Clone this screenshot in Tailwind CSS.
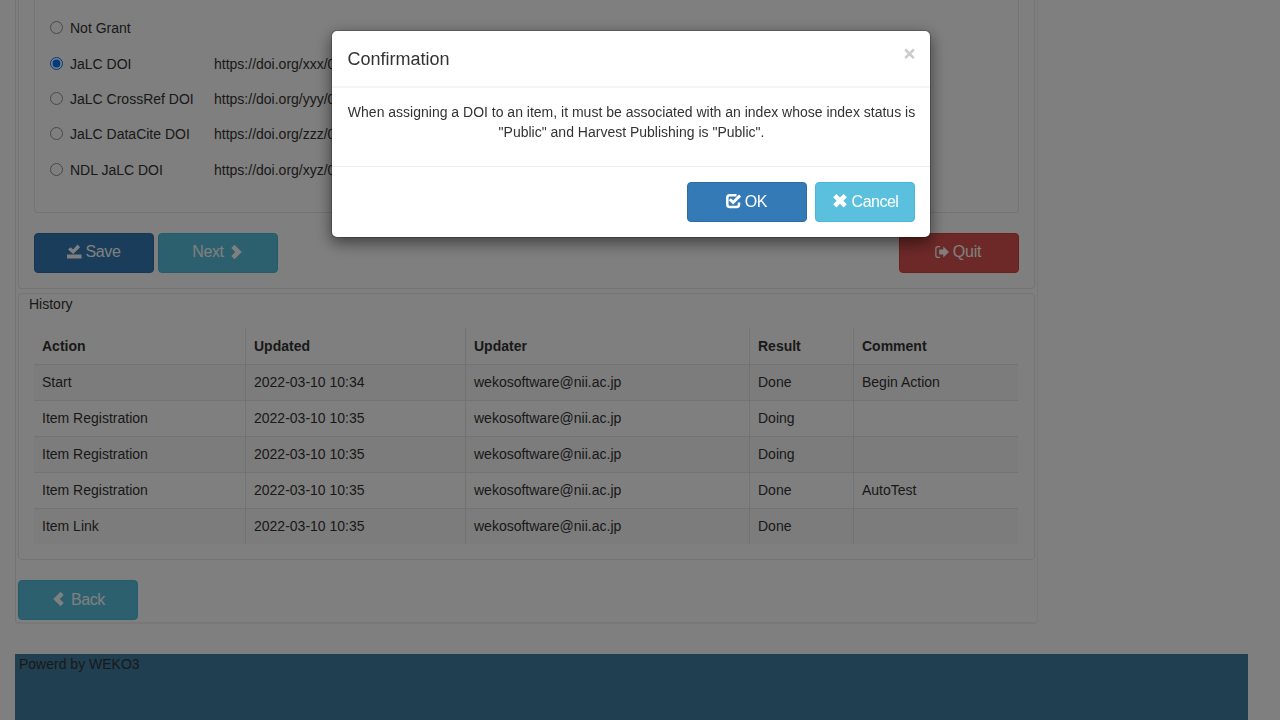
<!DOCTYPE html>
<html lang="en">
<head>
<meta charset="utf-8">
<title>Confirmation</title>
<script src="https://cdn.jsdelivr.net/npm/@tailwindcss/browser@4"></script>
</head>
<body class="h-[720px] overflow-hidden bg-white font-['Liberation_Sans',Arial,sans-serif] text-sm leading-5 text-[#333]">
<main class="ml-[15px] w-[1233px]">
  <div class="flex h-[624px] w-[1023px] flex-col rounded-b border-x border-b-2 border-[#f0f0f0] border-l-[#e7e7e7] px-[2px]">
    <section class="h-[289px] shrink-0 rounded-b border-x border-b border-[#e7e7e7] px-[15px]">
      <div class="flex h-[213px] flex-col rounded-b border-x border-b border-[#e7e7e7] pl-[15px] pt-[10.5px]">
        <label class="flex h-[35.4px] items-center"><input type="radio" name="doi" class="m-0 mb-px mr-[7px] size-[13px] opacity-80"><span class="w-36">Not Grant</span></label>
        <label class="flex h-[35.4px] items-center"><input type="radio" name="doi" checked class="m-0 mr-[7px] size-[13px]"><span class="w-36">JaLC DOI</span><span>https://doi.org/xxx/0</span></label>
        <label class="flex h-[35.4px] items-center"><input type="radio" name="doi" class="m-0 mr-[7px] size-[13px] opacity-80"><span class="w-36">JaLC CrossRef DOI</span><span>https://doi.org/yyy/0</span></label>
        <label class="flex h-[35.4px] items-center"><input type="radio" name="doi" class="m-0 mb-px mr-[7px] size-[13px] opacity-80"><span class="w-36">JaLC DataCite DOI</span><span>https://doi.org/zzz/0</span></label>
        <label class="flex h-[35.4px] items-center"><input type="radio" name="doi" class="m-0 mb-px mr-[7px] size-[13px] opacity-80"><span class="w-36">NDL JaLC DOI</span><span>https://doi.org/xyz/0</span></label>
      </div>
      <div class="mt-5 flex gap-1 text-base tracking-[-0.4px] text-white">
        <button class="flex h-10 w-[120px] items-center justify-center gap-1 rounded border border-[#2e6da4] bg-[#337ab7] pb-0.5 pr-[2px]"><svg class="size-4" viewBox="0 0 16 16" fill="currentColor"><path d="M1 10.500h14.500v4H1zM2 5.500l2.500-2.300 2.600 2.200L11.500 0.600l2.600 2.600L7.200 10z"/></svg>Save</button>
        <button class="flex h-10 w-[120px] items-center justify-center gap-1 rounded border border-[#46b8da] bg-[#5bc0de] pb-0.5">Next<svg class="size-4" viewBox="0 0 16 16" fill="currentColor"><path d="M6.500 0.800L13.700 8l-7.200 7.200-3.200-3.200L7.300 8 3.300 4z"/></svg></button>
        <button class="ml-auto flex h-10 w-[120px] items-center justify-center gap-1 rounded border border-[#d43f3a] bg-[#d9534f] pb-0.5 pr-[2px]"><svg class="size-[14px]" viewBox="0 0 14 14" fill="currentColor"><path d="M5 1v1.300H3a1.500 1.500 0 0 0-1.500 1.500v6.400A1.500 1.500 0 0 0 3 11.700h2V13H3a2.800 2.800 0 0 1-2.800-2.800V3.800A2.800 2.800 0 0 1 3 1zM8.300 1.500L14 7l-5.700 5.500V9.500H4.200v-5h4.100z"/></svg><span class="tracking-[-0.2px]">Quit</span></button>
      </div>
    </section>
    <section class="mt-1 h-[267px] shrink-0 rounded border border-[#e7e7e7] px-[15px]">
      <h2 class="-ml-[5px] h-[34px]">History</h2>
      <table class="w-[984px] table-fixed border-separate border-spacing-0 text-left [&_td]:h-9 [&_td]:border-t [&_td]:border-[#e7e7e7] [&_td]:px-2 [&_td]:pt-0 [&_td]:pb-0.5 [&_td:not(:first-child)]:border-l [&_th]:h-9 [&_th]:border-[#e7e7e7] [&_th]:px-2 [&_th]:py-0 [&_th:not(:first-child)]:border-l">
        <colgroup><col class="w-[211px]"><col class="w-[220px]"><col class="w-[284px]"><col class="w-[104px]"><col></colgroup>
        <thead><tr><th>Action</th><th>Updated</th><th>Updater</th><th>Result</th><th>Comment</th></tr></thead>
        <tbody class="[&>tr:nth-child(odd)]:bg-[#f9f9f9]">
          <tr><td>Start</td><td>2022-03-10 10:34</td><td>wekosoftware@nii.ac.jp</td><td>Done</td><td>Begin Action</td></tr>
          <tr><td>Item Registration</td><td>2022-03-10 10:35</td><td>wekosoftware@nii.ac.jp</td><td>Doing</td><td></td></tr>
          <tr><td>Item Registration</td><td>2022-03-10 10:35</td><td>wekosoftware@nii.ac.jp</td><td>Doing</td><td></td></tr>
          <tr><td>Item Registration</td><td>2022-03-10 10:35</td><td>wekosoftware@nii.ac.jp</td><td>Done</td><td>AutoTest</td></tr>
          <tr><td>Item Link</td><td>2022-03-10 10:35</td><td>wekosoftware@nii.ac.jp</td><td>Done</td><td></td></tr>
        </tbody>
      </table>
    </section>
    <button class="mt-5 flex h-10 w-[120px] shrink-0 items-center justify-center gap-1 rounded border border-[#46b8da] bg-[#5bc0de] text-base tracking-[-0.4px] text-white"><svg class="-mt-0.5 size-4" viewBox="0 0 16 16" fill="currentColor"><path d="M9.500 0.800L2.300 8l7.200 7.200 3.200-3.200L8.700 8l4-4z"/></svg>Back</button>
  </div>
  <footer class="mt-[30px] h-[66px] bg-[#4080a2] pl-1">Powerd by WEKO3</footer>
</main>
<div class="fixed inset-0 bg-black/50">
  <div role="dialog" class="ml-[331px] mt-[30px] h-[208px] w-[600px] rounded-md border border-black/20 bg-white bg-clip-padding shadow-[0_5px_15px_rgba(0,0,0,0.5)]">
    <header class="flex h-[57px] justify-between border-b-2 border-[#f5f5f5] pl-[15.6px] pr-[14px] pt-[15px]">
      <h4 class="text-lg leading-[26px]">Confirmation</h4>
      <button class="-mt-px h-4" aria-label="Close"><svg class="size-[13px]" viewBox="0 0 13 13" stroke="#ccc" stroke-width="2.600"><path d="M2.200 2.500l8.600 8.600M10.800 2.500l-8.600 8.600"/></svg></button>
    </header>
    <p class="h-[78px] pl-px pt-[14px] text-center">When assigning a DOI to an item, it must be associated with an index whose index status is<br>"Public" and Harvest Publishing is "Public".</p>
    <footer class="flex justify-end gap-2 border-t border-[#eee] px-[15px] pt-[15px] text-base text-white">
      <button class="flex h-10 w-[120px] items-center justify-center gap-1 rounded border border-[#2e6da4] bg-[#337ab7] pr-[2px] tracking-[-0.4px]"><svg class="-mt-0.5 size-4" viewBox="0 0 16 16" fill="none" stroke="currentColor"><path stroke-width="2.500" d="M11.500 2.200H4.800A2.500 2.500 0 0 0 2.300 4.700v6.800A2.500 2.500 0 0 0 4.800 14h6.700a2.500 2.500 0 0 0 2.500-2.500V9.500"/><path stroke-width="3" d="M4.800 6.200l3.300 3.300L15 2.600"/></svg>OK</button>
      <button class="flex h-10 w-[100px] items-center justify-center gap-1 rounded border border-[#46b8da] bg-[#5bc0de] tracking-[-0.5px]"><svg class="-mt-0.5 size-4" viewBox="0 0 16 16" fill="currentColor"><path d="M4.400 1L8 4.600 11.600 1l3.200 3.200L11.300 7.700l3.500 3.500-3.200 3.200L8 10.800l-3.600 3.600-3.200-3.200 3.500-3.500L1.200 4.200z"/></svg>Cancel</button>
    </footer>
  </div>
</div>
</body>
</html>
